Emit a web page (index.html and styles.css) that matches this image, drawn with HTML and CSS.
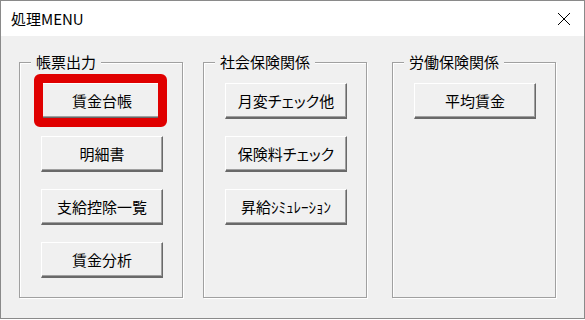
FILE: index.html
```html
<!DOCTYPE html>
<html lang="ja">
<head>
    <meta charset="UTF-8">
    <title>処理MENU</title>
    <link rel="stylesheet" href="styles.css">
</head>
<body>
    <div class="window">
        <div class="titlebar">
            <span class="title">処理MENU</span>
            <svg class="close" width="14" height="14" viewBox="0 0 14 14">
                <path d="M1 1 L13 13 M13 1 L1 13" stroke="#000" stroke-width="1" fill="none"/>
            </svg>
        </div>
        <div class="content">
            <div class="group">
                <span class="legend">帳票出力</span>
                <button class="btn is-marked">賃金台帳</button>
                <button class="btn">明細書</button>
                <button class="btn">支給控除一覧</button>
                <button class="btn">賃金分析</button>
            </div>
            <div class="group">
                <span class="legend">社会保険関係</span>
                <button class="btn">月変チェック他</button>
                <button class="btn">保険料チェック</button>
                <button class="btn">昇給ｼﾐｭﾚｰｼｮﾝ</button>
            </div>
            <div class="group group-last">
                <span class="legend">労働保険関係</span>
                <button class="btn">平均賃金</button>
            </div>
        </div>
    </div>
</body>
</html>
```

FILE: styles.css
```css
* {
    margin: 0;
    padding: 0;
    box-sizing: border-box;
    font-family: "Noto Sans CJK JP", "Noto Sans", sans-serif;
}

body {
    background-color: #ffffff;
    color: #000;
}

.window {
    width: 585px;
    height: 319px;
    border: 1px solid #8a8a8a;
    display: flex;
    flex-direction: column;
    background: #f0f0f0;
}

.titlebar {
    height: 35px;
    background: #ffffff;
    display: flex;
    align-items: center;
    justify-content: space-between;
    padding: 0 13px 0 10px;
}

.title {
    font-size: 15px;
    line-height: 18px;
}

.close {
    display: block;
}

.content {
    flex: 1;
    display: flex;
    gap: 20px;
    padding: 26px 0 0 18px;
}

.group {
    position: relative;
    width: 164px;
    height: 236px;
    border: 1px solid #a0a0a0;
    box-shadow: inset 1px 1px 0 #ffffff, 1px 1px 0 #ffffff;
    display: flex;
    flex-direction: column;
    align-items: flex-start;
    gap: 17px;
    padding: 20px 0 0 21px;
}

.group-last {
    margin-left: 5px;
}

.legend {
    position: absolute;
    top: -10px;
    left: 11px;
    padding: 0 5px;
    background: #f0f0f0;
    font-size: 15px;
    line-height: 18px;
    font-feature-settings: "palt";
}

.btn {
    position: relative;
    width: 122px;
    height: 36px;
    background: #f0f0f0;
    border-top: 1px solid #ffffff;
    border-left: 1px solid #ffffff;
    border-right: 1px solid #696969;
    border-bottom: 2px solid #696969;
    box-shadow: inset -1px -1px 0 #a0a0a0;
    font-size: 15px;
    line-height: 18px;
    color: #000;
    font-feature-settings: "palt";
    padding-top: 1px;
}

.is-marked::after {
    content: "";
    position: absolute;
    left: -8px;
    top: -10px;
    right: -5px;
    bottom: -10px;
    border: 9px solid #e00000;
    border-radius: 6px;
}
```
